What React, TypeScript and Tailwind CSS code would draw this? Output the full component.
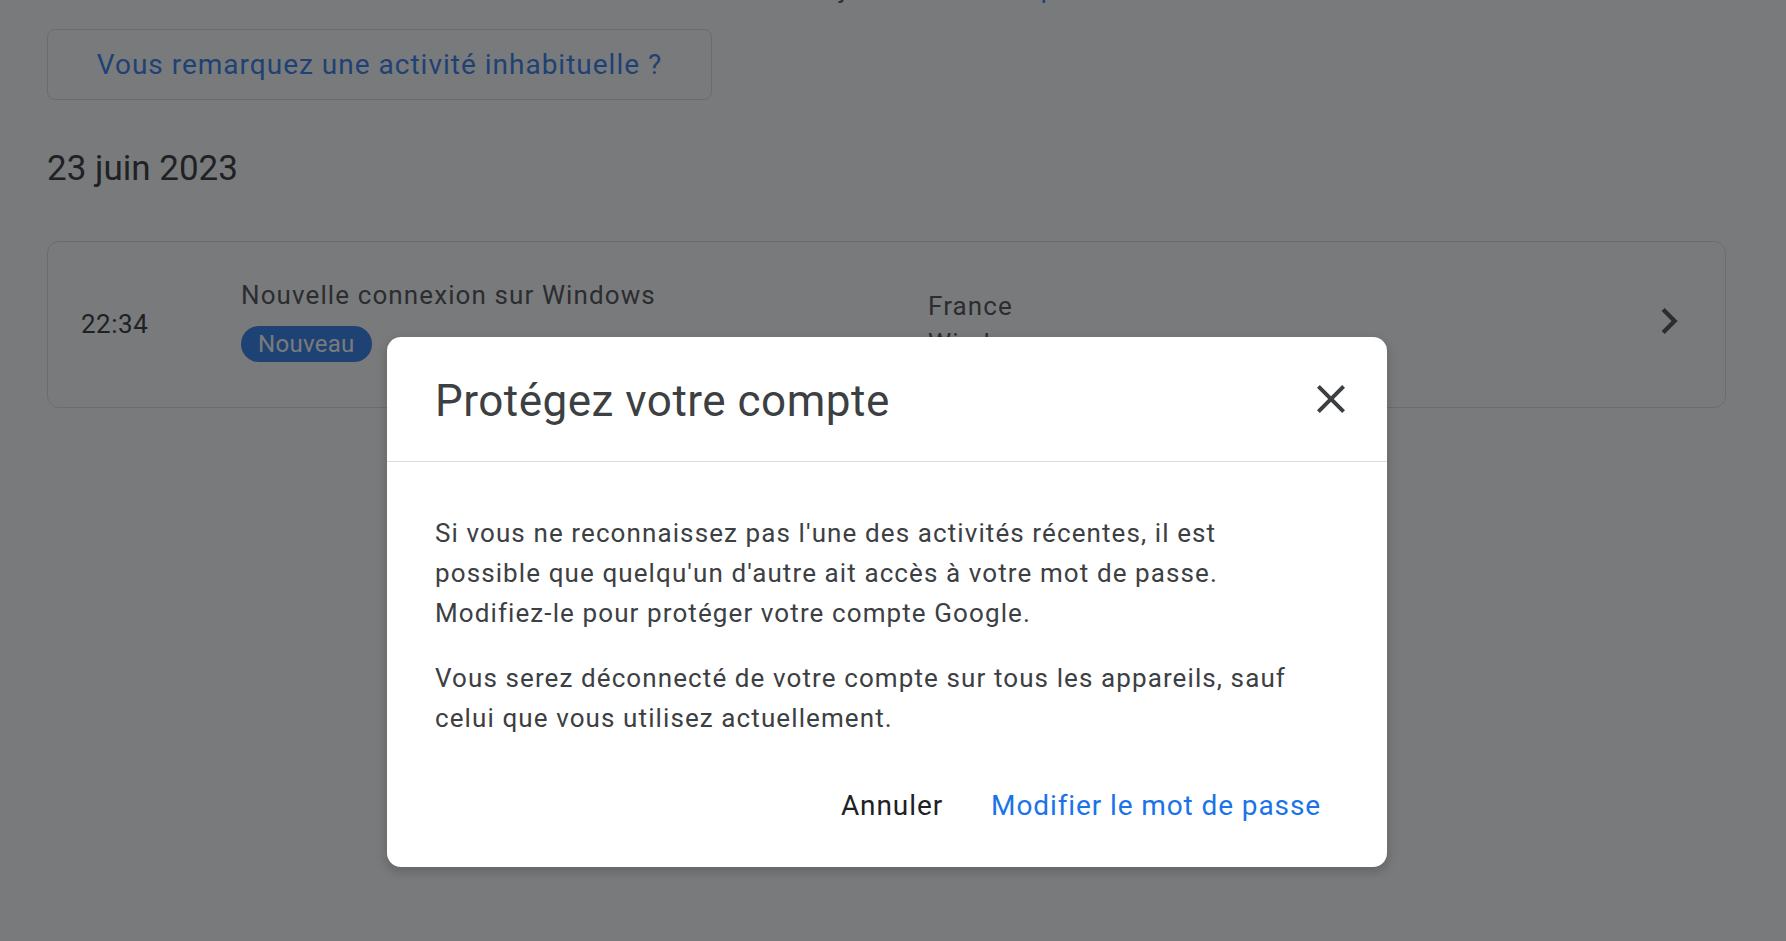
import React from "react";

function CloseIcon() {
  return (
    <svg viewBox="0 0 24 24" className="h-[48px] w-[48px]" fill="#3c4043">
      <path d="M19 6.41L17.59 5 12 10.59 6.41 5 5 6.41 10.59 12 5 17.59 6.41 19 12 13.41 17.59 19 19 17.59 13.41 12z" />
    </svg>
  );
}

function ChevronRight() {
  return (
    <svg viewBox="0 0 24 24" className="mb-[8px] h-[52px] w-[52px] shrink-0" fill="#3c4043">
      <path d="M10 6L8.59 7.41 13.17 12l-4.58 4.59L10 18l6-6z" />
    </svg>
  );
}

export default function App() {
  return (
    <div className="relative h-[941px] w-full overflow-hidden bg-white font-['Roboto',sans-serif]">
      <div className="pl-[47px] pr-[60px]">
        <div className="mt-[-31px] whitespace-nowrap text-[26px] leading-[40px] tracking-[1.1px] text-[#3c4043]">
          Activités liées à la sécurité de votre identifiant ces 28 derniers jours.{" "}
          <span className="text-[#1a73e8]">En savoir plus</span>
        </div>
        <button className="mt-[20px] flex h-[71px] w-[665px] items-center justify-center rounded-[8px] border border-[#dadce0] text-[28px] tracking-[1px] text-[#1a73e8]">
          Vous remarquez une activité inhabituelle ?
        </button>
        <div className="mt-[47px] text-[35px] leading-[44px] text-[#202124]">23 juin 2023</div>
        <div className="mt-[50px] flex h-[167px] items-center rounded-[12px] border border-[#dadce0] pl-[33px] pr-[30px]">
          <div className="w-[160px] shrink-0 text-[26px] tracking-[0.5px] text-[#202124]">22:34</div>
          <div className="flex w-[687px] shrink-0 flex-col items-start pb-[10px]">
            <div className="text-[26px] leading-[36px] tracking-[1.1px] text-[#3c4043]">
              Nouvelle connexion sur Windows
            </div>
            <span className="mt-[13px] h-[36px] rounded-full bg-[#1a73e8] px-[17px] text-[24px] leading-[36px] tracking-[0.3px] text-white">
              Nouveau
            </span>
          </div>
          <div className="flex-1 text-[26px] leading-[37px] tracking-[1.1px] text-[#3c4043]">
            <div>France</div>
            <div>Windows</div>
          </div>
          <ChevronRight />
        </div>
      </div>

      <div className="absolute inset-0 bg-[#202124]/60" />

      <div className="absolute left-[387px] top-[337px] w-[1000px] overflow-hidden rounded-[14px] bg-white shadow-[0_4px_10px_2px_rgba(0,0,0,0.15)]">
        <div className="flex h-[125px] items-center justify-between border-b border-[#dadce0] pl-[48px] pr-[32px]">
          <h2 className="pt-[4px] text-[44px] leading-[52px] tracking-[0.5px] text-[#3c4043]">
            Protégez votre compte
          </h2>
          <CloseIcon />
        </div>
        <div className="pl-[48px] pr-[74px] pt-[51px] text-[26px] leading-[40px] tracking-[1.1px] text-[#3c4043]">
          <p className="mb-[25px]">
            Si vous ne reconnaissez pas l'une des activités récentes, il est possible que quelqu'un d'autre ait accès à
            votre mot de passe. Modifiez-le pour protéger votre compte Google.
          </p>
          <p>
            Vous serez déconnecté de votre compte sur tous les appareils, sauf celui que vous utilisez actuellement.
          </p>
        </div>
        <div className="flex items-center justify-end gap-[16px] pb-[37px] pr-[50px] pt-[44px]">
          <button className="flex h-[48px] items-center px-[16px] text-[28px] tracking-[0.9px] text-[#202124]">
            Annuler
          </button>
          <button className="flex h-[48px] items-center px-[16px] text-[28px] tracking-[0.9px] text-[#1a73e8]">
            Modifier le mot de passe
          </button>
        </div>
      </div>
    </div>
  );
}
